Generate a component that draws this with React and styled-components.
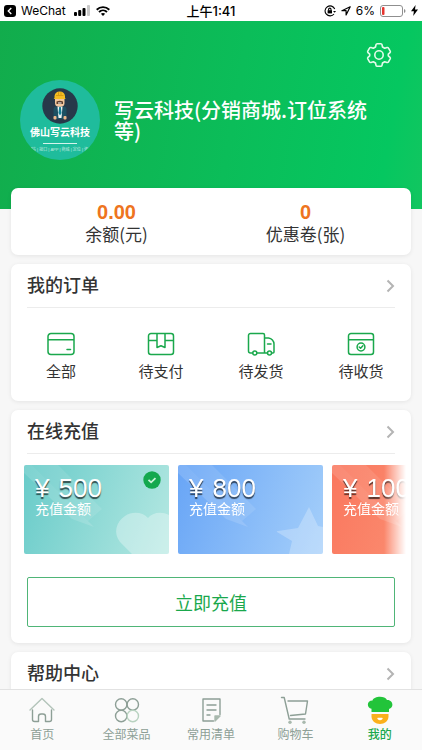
import React from "react";
import styled, { createGlobalStyle } from "styled-components";

const COLORS = {
    green: "#1aa84c",
    orange: "#ee7420",
    text: "#333333",
    muted: "#8d9f96",
    line: "#ececec",
    page: "#f7f7f7",
};

const orders = [
    { label: "全部", icon: "card" },
    { label: "待支付", icon: "box" },
    { label: "待发货", icon: "truck" },
    { label: "待收货", icon: "received" },
];

const amounts = [
    { value: 500, from: "#68cbc9", to: "#b5e8e2", shape: "heart" },
    { value: 800, from: "#68a5f6", to: "#a5cffa", shape: "star" },
    { value: 1000, from: "#fa775e", to: "#fb9a7c", shape: "star" },
];

const tabs = [
    { label: "首页", icon: "home" },
    { label: "全部菜品", icon: "dishes" },
    { label: "常用清单", icon: "list" },
    { label: "购物车", icon: "cart" },
    { label: "我的", icon: "chef" },
];

const App = () => {

    const [selected, setSelected] = React.useState(500);
    const [activeTab, setActiveTab] = React.useState("我的");

    return (
        <Shell>
            <GlobalStyle />
            <StatusBar />

            <Content>
                <Hero>
                    <SettingsButton aria-label="设置"><GearIcon /></SettingsButton>
                    <Profile>
                        <Avatar>
                            <Mascot />
                            <AvatarName>佛山写云科技</AvatarName>
                            <AvatarLine />
                            <AvatarTags>网站 | 接口 | APP | 商城 | 定位 | 咨询</AvatarTags>
                        </Avatar>
                        <UserName>写云科技(分销商城.订位系统等)</UserName>
                    </Profile>
                </Hero>

                <Cards>
                    <Stats>
                        <Stat><strong>0.00</strong><span>余额(元)</span></Stat>
                        <Stat><strong>0</strong><span>优惠卷(张)</span></Stat>
                    </Stats>

                    <Card>
                        <CardHead title="我的订单" />
                        <OrderGrid>
                            {orders.map((o) => (
                                <OrderLink href="#" key={o.label}>
                                    <OrderIcon name={o.icon} />
                                    {o.label}
                                </OrderLink>
                            ))}
                        </OrderGrid>
                    </Card>

                    <Card>
                        <CardHead title="在线充值" />
                        <Slider>
                            {amounts.map((a) => (
                                <Amount
                                    key={a.value}
                                    $from={a.from}
                                    $to={a.to}
                                    aria-pressed={selected === a.value}
                                    onClick={() => setSelected(a.value)}
                                >
                                    <AmountArt shape={a.shape} />
                                    <Price><span>¥</span><span>{a.value}</span></Price>
                                    <AmountLabel>充值金额</AmountLabel>
                                    {selected === a.value && <CheckBadge />}
                                </Amount>
                            ))}
                        </Slider>
                        <RechargeButton>立即充值</RechargeButton>
                    </Card>

                    <Card>
                        <CardHead title="帮助中心" />
                    </Card>
                </Cards>
            </Content>

            <TabBar>
                {tabs.map((t) => (
                    <Tab
                        href="#"
                        key={t.label}
                        $active={activeTab === t.label}
                        onClick={() => setActiveTab(t.label)}
                    >
                        <TabIcon name={t.icon} />
                        {t.label}
                    </Tab>
                ))}
            </TabBar>
        </Shell>
    )
}

const CardHead = ({ title }) => (
    <HeadRow href="#">
        <h2>{title}</h2>
        <svg width="9" height="14" viewBox="0 0 9 14" fill="none" stroke="#b4b4b4" strokeWidth="2">
            <path d="M1.5 1.5 7 7l-5.5 5.5" />
        </svg>
    </HeadRow>
)

const StatusBar = () => (
    <StatusRow>
        <StatusSide>
            <svg width="12" height="12" viewBox="0 0 12 12">
                <rect width="12" height="12" rx="3" fill="#000" />
                <path d="M7.3 3 4.3 6l3 3" fill="none" stroke="#fff" strokeWidth="1.4" />
            </svg>
            <span>WeChat</span>
            <SignalIcon width="17" height="11" viewBox="0 0 17 11">
                <rect x="0" y="7" width="3" height="4" rx="1" />
                <rect x="4.2" y="5" width="3" height="6" rx="1" />
                <rect x="8.5" y="3" width="3" height="8" rx="1" />
                <rect x="13" y="0" width="3" height="11" rx="1" fill="#c8c8c8" />
            </SignalIcon>
            <svg width="14" height="10" viewBox="0 0 14 10" fill="none" stroke="#000" strokeWidth="1.9">
                <path d="M.7 3.7c3.6-3.5 9-3.5 12.6 0M3 6c2.3-2.2 5.7-2.2 8 0" />
                <path d="M4.9 7.8c1.2-1.1 3-1.1 4.2 0L7 10z" fill="#000" stroke="none" />
            </svg>
        </StatusSide>
        <Clock>上午1:41</Clock>
        <StatusSide $end>
            <svg width="12" height="12" viewBox="0 0 12 12" fill="none" stroke="#000" strokeWidth="1.1">
                <path d="M10.7 4A5 5 0 1 0 10 9" />
                <path d="m9 6 1.7 1.8L12 6z" fill="#000" stroke="none" />
                <path d="M4.6 5.5V4.3a1.2 1.2 0 0 1 2.4 0v1.2" />
                <rect x="3.6" y="5.2" width="4.4" height="3.2" fill="#000" stroke="none" />
            </svg>
            <svg width="10" height="10" viewBox="0 0 10 10" fill="none" stroke="#000" strokeWidth="1.2" strokeLinejoin="round">
                <path d="M9.2.8.9 4.7h4.2v4.2z" />
            </svg>
            <span>6%</span>
            <svg width="26" height="12" viewBox="0 0 26 12">
                <rect x=".5" y=".5" width="22" height="11" rx="2.5" fill="none" stroke="#8f8f8f" />
                <rect x="2" y="2" width="2.5" height="8" rx="1" fill="#e6352f" />
                <path d="M24 4v4q1.5-.5 1.5-2T24 4" fill="#8f8f8f" />
            </svg>
            <svg width="7" height="11" viewBox="0 0 7 11"><path d="M4.6 0 0 6.2h2.9L2.2 11 7 4.6H4z" /></svg>
        </StatusSide>
    </StatusRow>
)

const GearIcon = () => (
    <svg width="26" height="26" viewBox="0 0 26 26" fill="none" stroke="#e4fbea" strokeWidth="1.6" strokeLinejoin="round">
        <path d="M11.2 1.7h3.6q1 0 1.200 1l.5 2.300 2.200 1.300 2.300-.7q1-.3 1.500.6l1.700 2.900q.5.900-.2 1.600L22.300 12.200v1.600l1.700 1.500q.7.700.2 1.600l-1.700 2.900q-.5.900-1.500.6l-2.300-.7-2.200 1.300-.5 2.300q-.2 1-1.200 1h-3.600q-1 0-1.200-1L9.500 21l-2.200-1.300-2.300.7q-1 .3-1.500-.6l-1.700-2.900q-.5-.9.2-1.600l1.700-1.500v-1.600L2 10.700q-.7-.7-.2-1.600l1.700-2.900q.5-.9 1.500-.6l2.300.7L9.500 5l.5-2.300q.2-1 1.200-1z" />
        <circle cx="13" cy="13" r="4.2" />
    </svg>
)

const Mascot = () => (
    <svg width="36" height="36" viewBox="0 0 36 36">
        <circle cx="18" cy="18" r="17.7" fill="#27394a" />
        <path d="M11.5 31V21.5q0-3 3-3h7q3 0 3 3V31z" fill="#1d5063" />
        <path d="M15.5 18.5h5L19.5 30h-3z" fill="#eef5f5" />
        <path d="M17.2 19h1.6l.8 6-1.6 2.500-1.6-2.500z" fill="#137d92" />
        <rect x="11.5" y="28" width="3" height="3.5" rx="1" fill="#efb68b" />
        <rect x="21.5" y="28" width="3" height="3.5" rx="1" fill="#efb68b" />
        <rect x="13" y="8" width="9.5" height="10.5" rx="3.5" fill="#f2c69d" />
        <path d="M14.5 13.5q3.2-1.5 6.5 0V16h-6.5z" fill="#5f402d" />
        <rect x="16" y="14.5" width="3.5" height="1" fill="#fff" />
        <path d="M12.5 10V8a5.300 5.300 0 0 1 10.500 0v2l.7 1H11.700z" fill="#f4bd22" />
        <path d="M14 7.5h7.5M16.5 4v3M19 4v3" stroke="#d99c12" />
    </svg>
)

const OrderIcon = ({ name }) => (
    <svg width="28" height="24" viewBox="0 0 28 24" fill="none" stroke={COLORS.green} strokeWidth="1.5" strokeLinecap="round" strokeLinejoin="round">
        {name === "card" && <path d="M4 1.5h20a3 3 0 0 1 3 3v15a3 3 0 0 1-3 3H4a3 3 0 0 1-3-3v-15a3 3 0 0 1 3-3zM1 7.7h26M20 17.500h3.500" />}
        {name === "box" && <path d="M4 1.5h20a2.500 2.500 0 0 1 2.500 2.500v16a2.500 2.500 0 0 1-2.500 2.500H4A2.500 2.500 0 0 1 1.500 20V4A2.500 2.500 0 0 1 4 1.500zM1.500 8.500H10M18 8.500h8.500M10 2v13.500l4-1.700 4 1.700V2" />}
        {name === "truck" && (
            <>
                <path d="M5.500 21H3.500a2 2 0 0 1-2-2V3.500a2 2 0 0 1 2-2H16a1.500 1.500 0 0 1 1.500 1.500v18H10M17.500 6h4a6 6 0 0 1 5.500 6v8a1 1 0 0 1-1 1h-1M20.500 21h-3M20.500 12H24" />
                <circle cx="7.8" cy="21" r="2" />
                <circle cx="22.5" cy="21" r="2" />
            </>
        )}
        {name === "received" && (
            <>
                <path d="M4 1.500h20a2.500 2.500 0 0 1 2.500 2.500v16a2.500 2.500 0 0 1-2.500 2.500H4A2.500 2.500 0 0 1 1.500 20V4A2.500 2.500 0 0 1 4 1.500zM1.500 7.700h25" />
                <circle cx="14" cy="15" r="3.9" />
                <path d="m12.200 15 1.400 1.300 2.300-2.500" />
            </>
        )}
    </svg>
)

const AmountArt = ({ shape }) => (
    <ArtSvg viewBox="0 0 145 89" fill="#fff">
        <path d="M0 0h8l62 62-22-8L0 8z" opacity=".14" />
        <path d="M8 0h26l44 44-14 12z" opacity=".1" />
        {shape === "heart"
            ? <path d="M145 50c-8-4-17-2-21 3-5-6-16-7-23-2-9 6-12 17-5 26l12 12h37z" opacity=".32" />
            : <path d="m131 42 9 19 5 1v27h-34l3-13-15-9q-1-1 1-1l20-3z" opacity=".25" />}
    </ArtSvg>
)

const CheckBadge = () => (
    <BadgeSvg width="18" height="18" viewBox="0 0 18 18">
        <circle cx="9" cy="9" r="8.7" fill="#13a84e" />
        <path d="m5.500 8.800 2.600 2.500 4.400-4.200" fill="none" stroke="#c9f3d8" strokeWidth="1.8" />
    </BadgeSvg>
)

const TabIcon = ({ name }) => (
    <svg width="30" height="28" viewBox="0 0 30 28" fill="none" stroke={COLORS.muted} strokeWidth="1.4" strokeLinecap="round" strokeLinejoin="round">
        {name === "home" && (
            <>
                <path d="M3 14 15 2.500 27 14" stroke="#b3c4ba" />
                <path d="M5.500 14v9.500q0 2 2 2H11.500V20.500q0-2.500 2.500-2.500h2q2.500 0 2.500 2.500v5h4q2 0 2-2V14" />
            </>
        )}
        {name === "dishes" && (
            <>
                <circle cx="9.2" cy="8.5" r="5.7" />
                <circle cx="20.8" cy="8.5" r="5.7" />
                <circle cx="9.2" cy="20" r="5.7" />
                <circle cx="20.8" cy="20" r="5.7" stroke="#b8d2c0" />
            </>
        )}
        {name === "list" && (
            <>
                <path d="M17.500 25H7V3h17v15.500M11 9h9M11 14h9M11 19h3" />
                <path d="M19 25v-5h5z" fill="#a9b9ae" stroke="#a9b9ae" />
            </>
        )}
        {name === "cart" && (
            <>
                <path d="M1.500 1.500h2.700l5 21.500H25M8 5h19.500l-2 13-15 1.500" />
                <circle cx="10" cy="26.200" r="1.7" fill="#a9b9ae" stroke="none" />
                <circle cx="24" cy="26.200" r="1.7" fill="#a9b9ae" stroke="none" />
            </>
        )}
        {name === "chef" && (
            <>
                <path d="M6.500 16v-3.200C1.500 12 1.500 4.500 7.500 4.500 9-.2 20-.5 22 4c6-.5 7.500 7.800 2 9V16z" fill="#22c43a" stroke="none" />
                <path d="M6.500 18h17v2.500c0 4.500-4 7.500-8.500 7.500s-8.500-3-8.500-7.500z" fill="#fbb01c" stroke="none" />
                <path d="M13 22.500h4q-2 2-4 0z" fill="#fff" stroke="#fff" />
            </>
        )}
    </svg>
)


const GlobalStyle = createGlobalStyle`
    * { box-sizing: border-box; }

    body {
        margin: 0;
        background: ${COLORS.page};
        color: ${COLORS.text};
        font-family: "Liberation Sans", "Noto Sans CJK SC", sans-serif;
    }

    a {
        color: inherit;
        text-decoration: none;
    }

    button {
        margin: 0;
        padding: 0;
        border: 0;
        background: none;
        font-family: inherit;
        cursor: pointer;
    }

    svg {
        display: block;
        flex: none;
    }
`

const Shell = styled.div`
    display: flex;
    flex-direction: column;
    height: 100vh;
`

const StatusRow = styled.div`
    display: grid;
    grid-template-columns: 1fr auto 1fr;
    align-items: center;
    height: 21px;
    padding: 0 4px;
    background: #fff;
    color: #000;
    font-family: Inter, "Noto Sans CJK SC", sans-serif;
    font-size: 12px;
`

const StatusSide = styled.div`
    display: flex;
    align-items: center;
    gap: 5px;
    justify-content: ${(p) => (p.$end ? "flex-end" : "flex-start")};
`

const SignalIcon = styled.svg`
    margin-left: 3px;
`

const Clock = styled.div`
    font-size: 13px;
    font-weight: 500;
    line-height: 20px;
`

const Content = styled.main`
    flex: 1;
    min-height: 0;
    overflow-y: auto;
    scrollbar-width: none;
`

const Hero = styled.header`
    display: flex;
    flex-direction: column;
    padding: 21px 30px 49px 20px;
    background: linear-gradient(100deg, #12ac4c 0%, #0bbd59 55%, #05c760 90%, #12c660 100%);
`

const SettingsButton = styled.button`
    align-self: flex-end;
`

const Profile = styled.div`
    display: flex;
    align-items: center;
    gap: 14px;
    margin-top: 12px;
`

const Avatar = styled.div`
    display: flex;
    flex: none;
    flex-direction: column;
    align-items: center;
    width: 80px;
    height: 80px;
    padding-top: 8px;
    overflow: hidden;
    border-radius: 50%;
    background: #1fbc9c;
    color: #fff;
    white-space: nowrap;
`

const AvatarName = styled.div`
    margin-top: 2px;
    font-size: 10px;
    font-weight: 700;
    line-height: 14px;
`

const AvatarLine = styled.div`
    width: 34px;
    height: 1px;
    margin: 3px 0;
    background: #d5f3ec;
`

const AvatarTags = styled.div`
    font-size: 4px;
    line-height: 6px;
    opacity: 0.7;
`

const UserName = styled.h1`
    margin: 0;
    color: #fff;
    font-size: 20px;
    font-weight: 500;
    line-height: 21px;
    font-family: "Noto Sans CJK SC", sans-serif;
`

const Cards = styled.div`
    display: flex;
    flex-direction: column;
    gap: 9px;
    margin-top: -21px;
    padding: 0 11px 9px;
`

const Card = styled.section`
    border-radius: 7px;
    background: #fff;
    box-shadow: 0 1px 4px rgba(0, 0, 0, 0.08);
`

const Stats = styled(Card)`
    display: grid;
    grid-template-columns: 1fr 1fr;
    padding: 13px 11px 10px;
`

const Stat = styled.div`
    display: flex;
    flex-direction: column;
    align-items: center;

    strong {
        color: ${COLORS.orange};
        font-size: 20px;
        line-height: 22px;
    }

    span {
        font-family: "Noto Sans CJK SC", sans-serif;
        font-size: 17px;
        line-height: 22px;
    }
`

const HeadRow = styled.a`
    display: flex;
    align-items: center;
    justify-content: space-between;
    height: 44px;
    margin: 0 16px;
    border-bottom: 1px solid ${COLORS.line};

    h2 {
        margin: 0;
        font-size: 18px;
        font-weight: 500;
        line-height: 24px;
    }
`

const OrderGrid = styled.div`
    display: grid;
    grid-template-columns: repeat(4, 1fr);
    padding: 24px 0 18px;
`

const OrderLink = styled.a`
    display: flex;
    flex-direction: column;
    align-items: center;
    gap: 5px;
    font-size: 15px;
    line-height: 22px;
`

const Slider = styled.div`
    display: flex;
    gap: 9px;
    margin: 11px 5px 0 13px;
    overflow-x: auto;
    scrollbar-width: none;
    mask-image: linear-gradient(to left, transparent 0, #000 22px);
`

const Amount = styled.button`
    position: relative;
    display: flex;
    flex: none;
    flex-direction: column;
    align-items: flex-start;
    width: 145px;
    height: 89px;
    padding: 9px 11px;
    overflow: hidden;
    border-radius: 2px;
    background: linear-gradient(110deg, ${(p) => p.$from}, ${(p) => p.$to});
    color: #fff;
`

const ArtSvg = styled.svg`
    position: absolute;
    inset: 0;
`

const BadgeSvg = styled.svg`
    position: absolute;
    top: 6px;
    right: 8px;
`

const Price = styled.span`
    position: relative;
    display: flex;
    gap: 9px;
    font-size: 26px;
    line-height: 28px;
    text-shadow: 0 2px 1px rgba(0, 0, 0, 0.65);
`

const AmountLabel = styled.span`
    position: relative;
    font-size: 14px;
    line-height: 14px;
`

const RechargeButton = styled.button`
    display: block;
    width: calc(100% - 32px);
    height: 50px;
    margin: 23px 16px 16px;
    border: 1px solid #4fb577;
    border-radius: 2px;
    color: ${COLORS.green};
    font-size: 18px;
`

const TabBar = styled.nav`
    display: grid;
    grid-template-columns: repeat(5, 1fr);
    height: 61px;
    padding-top: 6px;
    border-top: 1px solid #e2e2e2;
    background: #fafafa;
`

const Tab = styled.a`
    display: flex;
    flex-direction: column;
    align-items: center;
    gap: 3px;
    color: ${(p) => (p.$active ? COLORS.green : COLORS.muted)};
    font-size: 12px;
    font-weight: ${(p) => (p.$active ? 500 : 400)};
    line-height: 16px;
`

export default App;
